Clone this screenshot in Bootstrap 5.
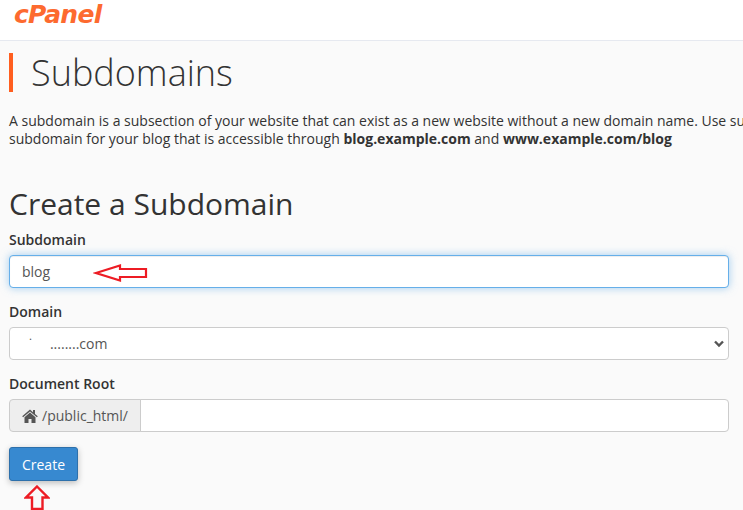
<!DOCTYPE html>
<html lang="en">
<head>
<meta charset="utf-8">
<title>Subdomains</title>
<link href="https://cdn.jsdelivr.net/npm/bootstrap@5.3.0/dist/css/bootstrap.min.css" rel="stylesheet">
<style>
html, body { height: 100%; overflow: hidden; }
body { background: #fafafa; font-family: "Open Sans", sans-serif; font-size: 14px; color: #333; }
.top-strip { height: 41px; background: #fff; border-bottom: 1px solid #e6e9f0; padding-left: 14px; }
.brand-mark { font-family: "DejaVu Sans", sans-serif; font-weight: 700; font-style: italic; font-size: 25px; line-height: 30px; color: #fd6a2f; letter-spacing: -.7px; margin-top: -10px; }
.page-wrap { padding: 12px 14px 0 9px; }
.page-title { border-left: 4px solid #ff5e1f; height: 39px; padding-left: 18px; font-size: 36px; font-weight: 300; line-height: 40px; color: #333; margin: 0 0 20px; }
.intro-text { width: 1000px; line-height: 18px; margin: 0 0 38px; white-space: nowrap; }
.section-title { font-size: 30px; font-weight: 400; line-height: 36px; margin: 0 0 8px; color: #333; }
.field-label { display: block; font-weight: 600; line-height: 19px; margin: 0 0 6px; }
.field-block { margin-bottom: 14px; }
.form-control.field-box, .form-select.field-box { height: 33px; min-height: 33px; font-size: 14px; padding: 5px 12px; border: 1px solid #ccc; border-radius: 4px; color: #555; background-color: #fff; line-height: 20px; }
.form-control.field-focus { border-color: #66afe9; box-shadow: inset 0 1px 1px rgba(0,0,0,.075), 0 0 8px rgba(102,175,233,.6); }
.form-select.field-box { background-image: url("data:image/svg+xml,%3csvg xmlns='http://www.w3.org/2000/svg' viewBox='0 0 10 8'%3e%3cpath fill='none' stroke='%23555' stroke-width='2.4' d='M1 1.5 5 5.5 9 1.5'/%3e%3c/svg%3e"); background-position: right 4px center; background-size: 10px 8px; }
.input-group-text.root-add { height: 33px; background: #eee; border: 1px solid #ccc; color: #555; font-size: 14px; padding: 5px 12px; border-radius: 4px 0 0 4px; gap: 4px; }
.btn.create-btn { height: 34px; width: 69px; padding: 0; background: #3789d0; border: 1px solid #2d70ab; color: #fff; font-size: 14px; border-radius: 3px; box-shadow: 0 2px 6px rgba(0,0,0,.25); }
.hint-wrap { position: relative; }
.action-row { margin-top: 15px; }
.arrow-over { position: absolute; }
.arrow-one { left: 84px; top: 9px; }
.arrow-two { left: 15px; top: 38px; }
</style>
</head>
<body>
<header class="top-strip d-flex align-items-center"><div class="brand-mark">cPanel</div></header>
<main class="page-wrap">
  <h1 class="page-title">Subdomains</h1>
  <p class="intro-text">A subdomain is a subsection of your website that can exist as a new website without a new domain name. Use subdomains to create memorable URLs for different content areas of your site. For example, you can create a<br>subdomain for your blog that is accessible through <strong>blog.example.com</strong> and <strong>www.example.com/blog</strong></p>
  <h2 class="section-title">Create a Subdomain</h2>
  <form>
    <div class="field-block">
      <label class="field-label" for="sub">Subdomain</label>
      <div class="hint-wrap">
        <input id="sub" class="form-control field-box field-focus" type="text" value="blog">
        <svg class="arrow-over arrow-one" width="56" height="18" viewBox="0 0 56 18"><path d="M3 9 27 1.5V5H53V13H27V16.5Z" fill="none" stroke="#ed1c24" stroke-width="2.2"/></svg>
      </div>
    </div>
    <div class="field-block">
      <label class="field-label" for="dom">Domain</label>
      <div class="hint-wrap">
        <select id="dom" class="form-select field-box"><option>&nbsp;&nbsp;˙&nbsp;&nbsp;&nbsp;&nbsp;&nbsp;........com</option></select>
      </div>
    </div>
    <div>
      <label class="field-label" for="root">Document Root</label>
      <div class="input-group flex-nowrap">
        <span class="input-group-text root-add">
          <svg width="16" height="14" viewBox="0 0 16 14" aria-hidden="true"><path fill="#555" d="M8 .6 .2 7.3l.9 1L8 2.4l6.9 5.9.9-1L13 4.9V1h-2v2.2zM8 3.6 2.5 8.3V14h4v-4h3v4h4V8.3z"/></svg>
          /public_html/
        </span>
        <input id="root" class="form-control field-box" type="text">
      </div>
    </div>
    <div class="hint-wrap action-row">
      <button type="button" class="btn create-btn">Create</button>
      <svg class="arrow-over arrow-two" width="26" height="26" viewBox="0 0 26 26"><path d="M13 1.5 24 12.5H18.500V24H8V12.5H2Z" fill="none" stroke="#ed1c24" stroke-width="2.4"/></svg>
    </div>
  </form>
</main>
<script src="https://cdn.jsdelivr.net/npm/bootstrap@5.3.0/dist/js/bootstrap.bundle.min.js"></script>
</body>
</html>
